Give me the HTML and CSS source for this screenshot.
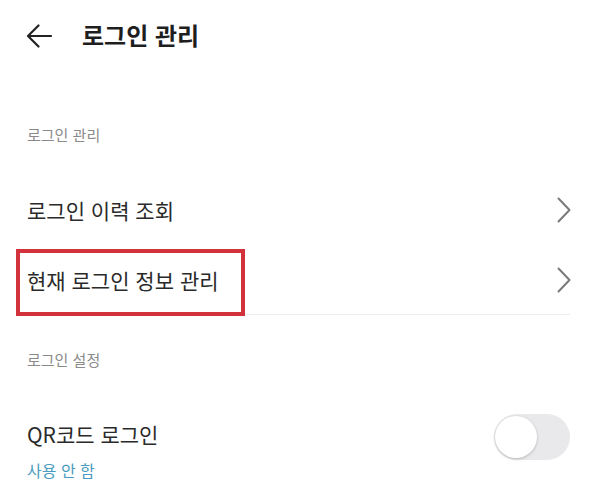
FILE: index.html
```html
<!DOCTYPE html>
<html lang="ko">
<head>
<meta charset="utf-8">
<title>로그인 관리</title>
<link rel="stylesheet" href="styles.css">
</head>
<body>
<div class="page">
  <header class="header">
    <svg class="back" width="26" height="24" viewBox="0 0 26 24" aria-hidden="true">
      <path d="M25 12H2M12.5 1.5L2 12l10.5 10.5" fill="none" stroke="#222" stroke-width="2.2" stroke-linecap="round" stroke-linejoin="round"/>
    </svg>
    <h1 class="title">로그인 관리</h1>
  </header>

  <div class="section-label first">로그인 관리</div>

  <div class="row">
    <span class="row-text">로그인 이력 조회</span>
    <svg class="chev" width="14" height="26" viewBox="0 0 14 26" aria-hidden="true">
      <path d="M1.5 1.5L12.5 13 1.5 24.5" fill="none" stroke="#7a7a7a" stroke-width="2" stroke-linecap="round" stroke-linejoin="round"/>
    </svg>
  </div>

  <div class="row divided highlighted">
    <span class="row-text">현재 로그인 정보 관리</span>
    <svg class="chev" width="14" height="26" viewBox="0 0 14 26" aria-hidden="true">
      <path d="M1.5 1.5L12.5 13 1.5 24.5" fill="none" stroke="#7a7a7a" stroke-width="2" stroke-linecap="round" stroke-linejoin="round"/>
    </svg>
    <div class="mark"></div>
  </div>

  <div class="section-label second">로그인 설정</div>

  <div class="switch-row">
    <div class="switch-text">
      <div class="row-text">QR코드 로그인</div>
      <div class="sub">사용 안 함</div>
    </div>
    <div class="toggle"><div class="knob"></div></div>
  </div>
</div>
</body>
</html>
```

FILE: styles.css
```css
html, body {
  margin: 0;
  padding: 0;
  background: #fff;
}
body {
  font-family: "Noto Sans CJK KR", "Noto Sans", sans-serif;
  color: #222;
}
.page {
  width: 600px;
  height: 503px;
  overflow: hidden;
  padding: 0 30px 0 27px;
  box-sizing: border-box;
}
.header {
  height: 70px;
  display: flex;
  align-items: center;
  margin-left: -1px;
}
.back {
  display: block;
  margin-top: 2px;
}
.title {
  margin: 0 0 0 30px;
  font-size: 24px;
  font-weight: 700;
  line-height: 30px;
  color: #1e1e1e;
}
.section-label {
  font-size: 15px;
  line-height: 20px;
  color: #8a8a8a;
}
.section-label.first {
  padding-top: 55px;
  margin-bottom: 30px;
}
.section-label.second {
  padding-top: 35px;
}
.row {
  position: relative;
  height: 70px;
  display: flex;
  align-items: center;
  justify-content: space-between;
}
.row.divided {
  height: 69px;
  border-bottom: 1px solid #ececec;
}
.row-text {
  font-size: 21px;
  line-height: 30px;
  color: #2a2a2a;
}
.chev {
  display: block;
  margin-right: -1px;
}
.mark {
  position: absolute;
  left: -11px;
  top: 4px;
  width: 229px;
  height: 67px;
  border: 4px solid #d1323b;
  box-sizing: border-box;
}
.switch-row {
  margin-top: 49px;
  display: flex;
  align-items: flex-start;
  justify-content: space-between;
}
.sub {
  margin-top: 10px;
  font-size: 16px;
  line-height: 22px;
  color: #4a9bbd;
}
.toggle {
  position: relative;
  margin-top: -5px;
  width: 76px;
  height: 46px;
  border-radius: 23px;
  background: #e9e9eb;
}
.knob {
  position: absolute;
  left: 1px;
  top: 2px;
  width: 42px;
  height: 42px;
  border-radius: 50%;
  background: #fff;
  box-shadow: 0 1px 3px rgba(0,0,0,0.22);
}
```
